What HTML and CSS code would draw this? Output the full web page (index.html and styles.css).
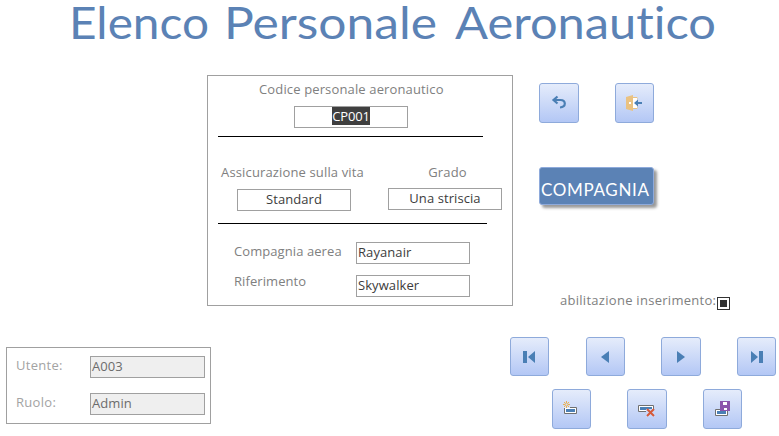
FILE: index.html
```html
<!DOCTYPE html>
<html lang="it">
<head>
<meta charset="utf-8">
<title>Elenco Personale Aeronautico</title>
<link rel="stylesheet" href="styles.css">
</head>
<body>
<h1 class="title">
<svg width="779" height="75" viewBox="0 0 779 75">
<text x="69" y="39" textLength="140" lengthAdjust="spacingAndGlyphs">Elenco</text>
<text x="224" y="39" textLength="213" lengthAdjust="spacingAndGlyphs">Personale</text>
<text x="455" y="39" textLength="261" lengthAdjust="spacingAndGlyphs">Aeronautico</text>
</svg>
</h1>
<main class="main">
<div class="left">
<section class="panel staff">
<label class="code-label"><span>Codice personale aeronautico</span></label>
<div class="field code"><span class="selected">CP001</span></div>
<hr class="rule">
<div class="pair">
<div class="cell"><label>Assicurazione sulla vita</label><div class="field center">Standard</div></div>
<div class="cell grade"><label>Grado</label><div class="field center">Una striscia</div></div>
</div>
<hr class="rule second">
<div class="row first"><label>Compagnia aerea</label><div class="field">Rayanair</div></div>
<div class="row"><label>Riferimento</label><div class="field">Skywalker</div></div>
</section>
<section class="panel user">
<div class="row"><label>Utente:</label><div class="field">A003</div></div>
<div class="row"><label>Ruolo:</label><div class="field">Admin</div></div>
</section>
</div>
<div class="right">
<div class="actions">
<button class="btn wide" aria-label="Annulla"><svg width="16" height="16" viewBox="0 0 16 16"><path d="M6.500 1.500 2.500 5l4 3.500M2.500 5H9.500c2.600 0 4.300 1.300 4.300 3.600 0 2.400-1.700 3.700-4.800 3.900" fill="none" stroke="#4a7fb5" stroke-width="2.200"/></svg></button>
<button class="btn" aria-label="Esci"><svg width="19" height="19" viewBox="0 0 19 19"><path d="M7 3.500h5v2M7 14.500h5v-2" fill="#fff" stroke="#eac282"/><path d="M7.500 4H12v10H7.500Z" fill="#fff"/><path d="M1 3 8 1v16l-7-2Z" fill="#eac282"/><path d="M4 8h2v2H4Z" fill="#fff"/><path d="m9 9 4-3.500V8h4v2h-4v2.500Z" fill="#4a7fb5"/></svg></button>
</div>
<button class="company">COMPAGNIA</button>
<div class="enable"><span>abilitazione inserimento:</span><i class="check"></i></div>
<div class="nav">
<button class="btn" aria-label="Primo"><svg width="13" height="12" viewBox="0 0 13 12"><path d="M0 0h4v12H0ZM12 0v12L5 6Z" fill="#4a7fb5"/></svg></button>
<button class="btn" aria-label="Precedente"><svg width="9" height="12" viewBox="0 0 9 12"><path d="M8 0v12L0 6Z" fill="#4a7fb5"/></svg></button>
<button class="btn wide" aria-label="Successivo"><svg width="8" height="12" viewBox="0 0 8 12"><path d="M0 0v12L8 6Z" fill="#4a7fb5"/></svg></button>
<button class="btn" aria-label="Ultimo"><svg width="13" height="12" viewBox="0 0 13 12"><path d="M1 0v12L8 6ZM9 0h4v12H9Z" fill="#4a7fb5"/></svg></button>
</div>
<div class="edit">
<button class="btn" aria-label="Nuovo"><svg width="19" height="18" viewBox="0 0 19 18"><path d="M2.500 7.500h12v6h-12Z" fill="#fff" stroke="#707070"/><path d="M4 9h9v3H4Z" fill="#4a7fb5"/><path d="M1 6h7v2H1Z" fill="#dbe4fb"/><circle cx="4.500" cy="4.500" r="1.500" fill="none" stroke="#eab050"/><path d="M4.500 1v2M4.500 6v2M1 4.500h2M6 4.500h2M2 2l1 1M7 2 6 3M2 7l1-1M7 7 6 6" stroke="#eab050"/></svg></button>
<button class="btn wide" aria-label="Elimina"><svg width="18" height="18" viewBox="0 0 18 18"><path d="M.500 5.500h15v6H.500Z" fill="#fff" stroke="#707070"/><path d="M2 7h12v3H2Z" fill="#4a7fb5"/><path d="M8 9h9v8H8Z" fill="#cad7f9"/><path d="m9 9 7 7m0-7-7 7" stroke="#d55a3a" stroke-width="2"/></svg></button>
<button class="btn" aria-label="Salva"><svg width="19" height="18" viewBox="0 0 19 18"><path d="M2.500 9.500h12v6h-12Z" fill="#fff" stroke="#707070"/><path d="M4 11h9v3H4Z" fill="#4a7fb5"/><path d="M7 1h10v10H7Z" fill="#8b55ac"/><path d="M10 2h4v3h-4ZM11 8h3v2h-3Z" fill="#fff"/></svg></button>
</div>
</div>
</main>
</body>
</html>
```
FILE: styles.css
```css
* { box-sizing: border-box; }
body {
  margin: 0;
  width: 779px;
  height: 436px;
  overflow: hidden;
  background: #fff;
  font: 13px/18px "Open Sans", sans-serif;
  letter-spacing: .08px;
  color: #3c3c3c;
}
.title { margin: 0; height: 75px; font-weight: 400; letter-spacing: 0; }
.title svg { display: block; overflow: visible; }
.title text {
  font: 400 45px Lato, sans-serif;
  font-variant-ligatures: none;
  fill: #5b82b5;
}
.main { display: flex; }
.left { width: 510px; flex: none; }
.right { width: 269px; flex: none; }
.panel { border: 1px solid #a0a0a0; }
.staff { width: 306px; height: 231px; margin-left: 207px; }
label { color: #808080; display: block; white-space: nowrap; }
.field {
  width: 114px;
  height: 22px;
  border: 1px solid #a0a0a0;
  padding: 0 1px;
  line-height: 18px;
  white-space: nowrap;
}
.center { text-align: center; }
.code-label { margin: 4px 0 0 51px; letter-spacing: .14px; }
.code { margin: 8px 0 8px 86px; text-align: center; }
.selected { background: #3f3f3f; color: #fff; display: inline-block; height: 18px; letter-spacing: -.2px; }
.rule { border: 0; height: 1px; width: 265px; margin: 0 0 0 10px; background: #000; }
.second { width: 269px; margin-top: 12px; }
.pair { display: flex; gap: 37px; padding: 26px 0 0 29px; }
.cell { width: 114px; }
.cell label {
  display: flex;
  justify-content: center;
  margin: 0 -25px 8px -28px;
  letter-spacing: .14px;
}
.cell.grade label { margin: 0 0 7px 5px; }
.staff .row { display: flex; height: 22px; margin: 11px 0 0 26px; }
.staff .row label { width: 122px; margin-top: -3px; }
.staff .row.first { margin-top: 18px; }
.staff .row.first label { margin-top: 0; }
.user { width: 205px; height: 77px; margin: 41px 0 0 6px; padding: 8px 0 0 9px; }
.user .row { display: flex; height: 22px; margin-bottom: 15px; }
.user label { width: 74px; color: #a3a3a3; letter-spacing: .3px; }
.user .field { width: 115px; background: #efefef; color: #6c6c6c; }
.btn {
  width: 39px;
  height: 39px;
  padding: 0;
  border: 1px solid #8eaadb;
  border-radius: 3px;
  background: linear-gradient(#e5ecfb, #b3c7f5);
  display: flex;
  align-items: center;
  justify-content: center;
}
.wide { width: 40px; }
.actions { display: flex; gap: 36px; padding: 8px 0 0 29px; }
.actions .btn, .edit .btn { height: 40px; }
.company {
  display: block;
  width: 115px;
  height: 38px;
  margin: 44px 0 0 29px;
  padding: 7px 0 0 1px;
  text-align: left;
  white-space: nowrap;
  border: 1px solid #8eaadb;
  border-radius: 3px;
  background: #5b82b5;
  color: #fff;
  font: 17px/20px Lato, sans-serif;
  letter-spacing: .65px;
  box-shadow: 3px 3px 3px #999;
}
.enable { display: flex; color: #808080; padding: 86px 0 0 50px; height: 132px; white-space: nowrap; letter-spacing: .28px; }
.enable span { width: 157px; }
.check {
  width: 13px;
  height: 13px;
  margin-top: 6px;
  border: 1px solid #333;
  background: #333;
  background-clip: content-box;
  padding: 2px;
}
.nav { display: flex; gap: 36px; }
.nav .btn:first-child { margin-right: 1px; }
.edit { display: flex; gap: 36px; padding: 13px 0 0 42px; }
```
